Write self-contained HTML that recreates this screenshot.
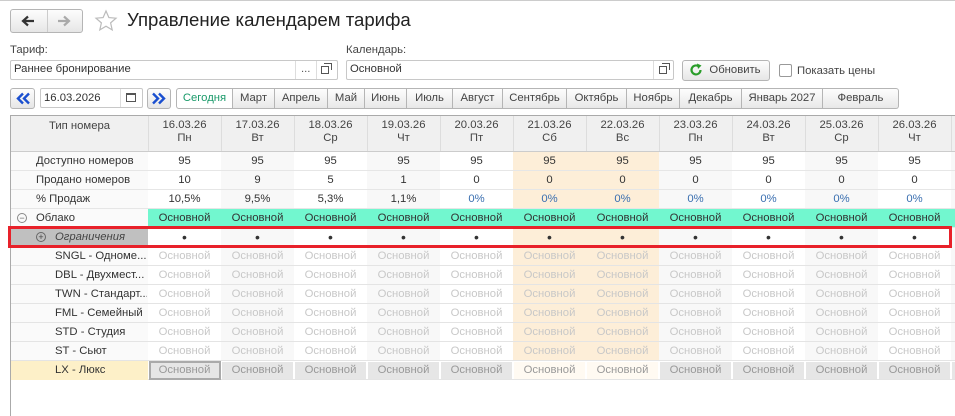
<!DOCTYPE html>
<html><head><meta charset="utf-8"><style>
*{box-sizing:border-box;margin:0;padding:0}
html,body{width:955px;height:416px;overflow:hidden}
body{background:#fff;font-family:"Liberation Sans","DejaVu Sans",sans-serif;font-size:11.3px;color:#333;position:relative}
.a{position:absolute}
.btn{position:absolute;border:1px solid #b5b5b5;border-radius:3px;background:linear-gradient(#fdfdfd,#e6e6e6);text-align:center;color:#444}
.inp{position:absolute;border:1px solid #c8c8c8;border-radius:2px;background:#fff;padding-left:3px;line-height:17px;color:#333}
.mb{position:absolute;top:88px;height:21px;border:1px solid #b5b5b5;border-left:none;background:linear-gradient(#fdfdfd,#e8e8e8);text-align:center;line-height:19px;color:#444}
.c{position:absolute;text-align:center;width:73px;height:19px;line-height:19px;white-space:nowrap}
#wrap{position:absolute;left:0;top:0;width:955px;height:416px;overflow:hidden}
</style></head><body><div id="wrap">
<div class="a" style="left:0;top:0;width:955px;height:1px;background:#ccc"></div>
<div class="btn" style="left:10px;top:9px;width:73px;height:24px"></div>
<div class="a" style="left:47px;top:10px;width:1px;height:22px;background:#ccc"></div>
<svg class="a" style="left:21px;top:15px" width="14" height="12" viewBox="0 0 14 12"><path d="M13 6H3M7 1.5L2 6l5 4.5" fill="none" stroke="#333" stroke-width="2.2"/></svg>
<svg class="a" style="left:57px;top:15px" width="14" height="12" viewBox="0 0 14 12"><path d="M1 6h10M7 1.5L12 6l-5 4.5" fill="none" stroke="#aaa" stroke-width="2.2"/></svg>
<svg class="a" style="left:94px;top:9px" width="24" height="24" viewBox="0 0 24 24"><path d="M12 2l2.9 6.6 7.1.6-5.4 4.7 1.6 7-6.2-3.7-6.2 3.7 1.6-7L2 9.2l7.1-.6z" fill="none" stroke="#bbb" stroke-width="1.2"/></svg>
<div class="a" style="left:127px;top:9px;font-size:18.6px;color:#222">Управление календарем тарифа</div>
<div class="a" style="left:10px;top:44px;color:#444">Тариф:</div>
<div class="a" style="left:346px;top:44px;color:#444">Календарь:</div>
<div class="inp" style="left:10px;top:60px;width:328px;height:20px">Раннее бронирование</div>
<div class="a" style="left:295px;top:61px;width:1px;height:18px;background:#ddd"></div>
<div class="a" style="left:316px;top:61px;width:1px;height:18px;background:#ddd"></div>
<div class="a" style="left:301px;top:63px;color:#555">...</div>
<div class="a" style="left:321px;top:66px;width:8px;height:8px;border:1px solid #555"></div><div class="a" style="left:324px;top:63px;width:8px;height:7px;border:1px solid #555;border-bottom:none;border-left:none"></div>
<div class="inp" style="left:346px;top:60px;width:328px;height:20px">Основной</div>
<div class="a" style="left:653px;top:61px;width:1px;height:18px;background:#ddd"></div>
<div class="a" style="left:659px;top:66px;width:8px;height:8px;border:1px solid #555"></div><div class="a" style="left:662px;top:63px;width:8px;height:7px;border:1px solid #555;border-bottom:none;border-left:none"></div>
<div class="btn" style="left:682px;top:60px;width:88px;height:21px;line-height:19px;padding-left:18px">Обновить</div>
<svg class="a" style="left:689px;top:63px" width="14" height="14" viewBox="0 0 14 14"><path d="M11.5 7A4.5 4.5 0 1 1 9.5 3.2" fill="none" stroke="#2a9d2a" stroke-width="2.2"/><path d="M8 0.5L12.5 2.5 9 6z" fill="#2a9d2a"/></svg>
<div class="a" style="left:779px;top:64px;width:13px;height:13px;border:1px solid #999;border-radius:2px;background:#fff"></div>
<div class="a" style="left:797px;top:65px;color:#444">Показать цены</div>
<div class="btn" style="left:10px;top:88px;width:25px;height:21px"></div>
<svg class="a" style="left:15px;top:92px" width="16" height="13" viewBox="0 0 16 13"><path d="M8 1.5L3 6.5l5 5M14 1.5L9 6.5l5 5" fill="none" stroke="#1a4fd0" stroke-width="2.4"/></svg>
<div class="inp" style="left:40px;top:88px;width:103px;height:20px;line-height:18px">16.03.2026</div>
<div class="a" style="left:120px;top:89px;width:1px;height:18px;background:#ddd"></div>
<div class="a" style="left:126px;top:93px;width:10px;height:9px;border:1px solid #555;border-top-width:2px"></div>
<div class="btn" style="left:147px;top:88px;width:24px;height:21px"></div>
<svg class="a" style="left:151px;top:92px" width="16" height="13" viewBox="0 0 16 13"><path d="M2 1.5l5 5-5 5M8 1.5l5 5-5 5" fill="none" stroke="#1a4fd0" stroke-width="2.4"/></svg>
<div class="mb" style="left:176px;width:57px;border-left:1px solid #b5b5b5;border-radius:3px 0 0 3px;background:#fff;color:#1a9a6a">Сегодня</div>
<div class="mb" style="left:233px;width:42px">Март</div>
<div class="mb" style="left:275px;width:53px">Апрель</div>
<div class="mb" style="left:328px;width:37px">Май</div>
<div class="mb" style="left:365px;width:42px">Июнь</div>
<div class="mb" style="left:407px;width:46px">Июль</div>
<div class="mb" style="left:453px;width:50px">Август</div>
<div class="mb" style="left:503px;width:64px">Сентябрь</div>
<div class="mb" style="left:567px;width:60px">Октябрь</div>
<div class="mb" style="left:627px;width:53px">Ноябрь</div>
<div class="mb" style="left:680px;width:62px">Декабрь</div>
<div class="mb" style="left:742px;width:81px">Январь 2027</div>
<div class="mb" style="left:823px;width:76px;border-radius:0 3px 3px 0">Февраль</div>
<div class="a" style="left:10px;top:115px;width:945px;height:1px;background:#aaa"></div>
<div class="a" style="left:10px;top:115px;width:1px;height:301px;background:#aaa"></div>
<div id="g"></div>
</div>
<script>
var g=document.getElementById('g'),h='';
var d=['16.03.26','17.03.26','18.03.26','19.03.26','20.03.26','21.03.26','22.03.26','23.03.26','24.03.26','25.03.26','26.03.26','27'];
var w=['Пн','Вт','Ср','Чт','Пт','Сб','Вс','Пн','Вт','Ср','Чт','Пт'];
var r1=['95','95','95','95','95','95','95','95','95','95','95','95'];
var r2=['10','9','5','1','0','0','0','0','0','0','0','0'];
var r3=['10,5%','9,5%','5,3%','1,1%','0%','0%','0%','0%','0%','0%','0%','0%'];
function cw(i){return i==11?4:73;}
h+='<div class="a" style="left:11px;top:116px;width:944px;height:36px;background:#f0f0f0"></div>';
h+='<div class="a" style="left:11px;top:120px;width:137px;text-align:center;color:#444">Тип номера</div>';
for(var i=0;i<12;i++){var x=148+i*73;
h+='<div class="a" style="left:'+x+'px;top:116px;width:1px;height:36px;background:#ddd"></div>';
if(i<11)h+='<div class="a" style="left:'+x+'px;top:119px;width:73px;text-align:center;line-height:13px;color:#444">'+d[i]+'<br>'+w[i]+'</div>';
var bg=(i==5||i==6)?'#fdeed8':(i%2?'#f8f8f8':'#fff');
h+='<div class="a" style="left:'+x+'px;top:152px;width:'+cw(i)+'px;height:209px;background:'+bg+'"></div>';}
h+='<div class="a" style="left:11px;top:152px;width:137px;height:209px;background:#fafafa"></div>';
h+='<div class="a" style="left:11px;top:151px;width:944px;height:1px;background:#ccc"></div>';
var lab=['Доступно номеров','Продано номеров','% Продаж'];
var rows=[r1,r2,r3];
for(var k=0;k<3;k++){var y=152+k*19;
h+='<div class="a" style="left:36px;top:'+y+'px;line-height:19px">'+lab[k]+'</div>';
for(var i=0;i<11;i++){h+='<div class="c" style="left:'+(148+i*73)+'px;top:'+y+'px;color:'+(k==2&&i>3?'#3a6fb0':'#333')+'">'+rows[k][i]+'</div>';}}
h+='<div class="a" style="left:148px;top:209px;width:807px;height:19px;background:#72f7cf"></div>';
h+='<div class="a" style="left:17px;top:213px;width:10px;height:10px;border:1px solid #888;border-radius:50%;font-size:9px;line-height:8px;text-align:center;color:#666">−</div>';
h+='<div class="a" style="left:36px;top:209px;line-height:19px">Облако</div>';
for(var i=0;i<11;i++)h+='<div class="c" style="left:'+(148+i*73)+'px;top:209px">Основной</div>';
h+='<div class="a" style="left:11px;top:228px;width:137px;height:19px;background:#c0c0c0"></div>';
h+='<div class="a" style="left:36px;top:232px;width:10px;height:10px;border:1px solid #666;border-radius:50%;font-size:9px;line-height:8px;text-align:center;color:#444">+</div>';
h+='<div class="a" style="left:55px;top:228px;line-height:19px;font-style:italic;color:#444">Ограничения</div>';
for(var i=0;i<11;i++)h+='<div class="c" style="left:'+(148+i*73)+'px;top:228px;font-size:14px">•</div>';
var t=['SNGL - Одноме...','DBL - Двухмест...','TWN - Стандарт...','FML - Семейный','STD - Студия','ST - Сьют','LX - Люкс'];
for(var k=0;k<7;k++){var y=247+k*19;
h+='<div class="a" style="left:11px;top:'+(y+18)+'px;width:944px;height:1px;background:#e4e4e4"></div>';
if(k==6){h+='<div class="a" style="left:11px;top:'+y+'px;width:137px;height:19px;background:#fdf0c8"></div>';
for(var i=0;i<12;i++){var bg=(i==5||i==6)?'#fffaf2':'#e6e6e6';h+='<div class="a" style="left:'+(149+i*73)+'px;top:'+(y+1)+'px;width:'+(i==11?3:71)+'px;height:17px;background:'+bg+'"></div>';}
h+='<div class="a" style="left:149px;top:'+(y)+'px;width:72px;height:19px;border:2px solid #aaa"></div>';}
h+='<div class="a" style="left:55px;top:'+y+'px;line-height:19px;width:92px;overflow:hidden;white-space:nowrap">'+t[k]+'</div>';
for(var i=0;i<11;i++)h+='<div class="c" style="left:'+(148+i*73)+'px;top:'+y+'px;color:'+(k==6?'#999':'#c8c8c8')+'">Основной</div>';}
for(var k=0;k<4;k++)h+='<div class="a" style="left:11px;top:'+(170+k*19)+'px;width:944px;height:1px;background:#e6e6e6"></div>';
h+='<div class="a" style="left:8px;top:226px;width:944px;height:22px;border:3px solid #e8212a"></div>';
g.innerHTML=h;
</script>
</body></html>
